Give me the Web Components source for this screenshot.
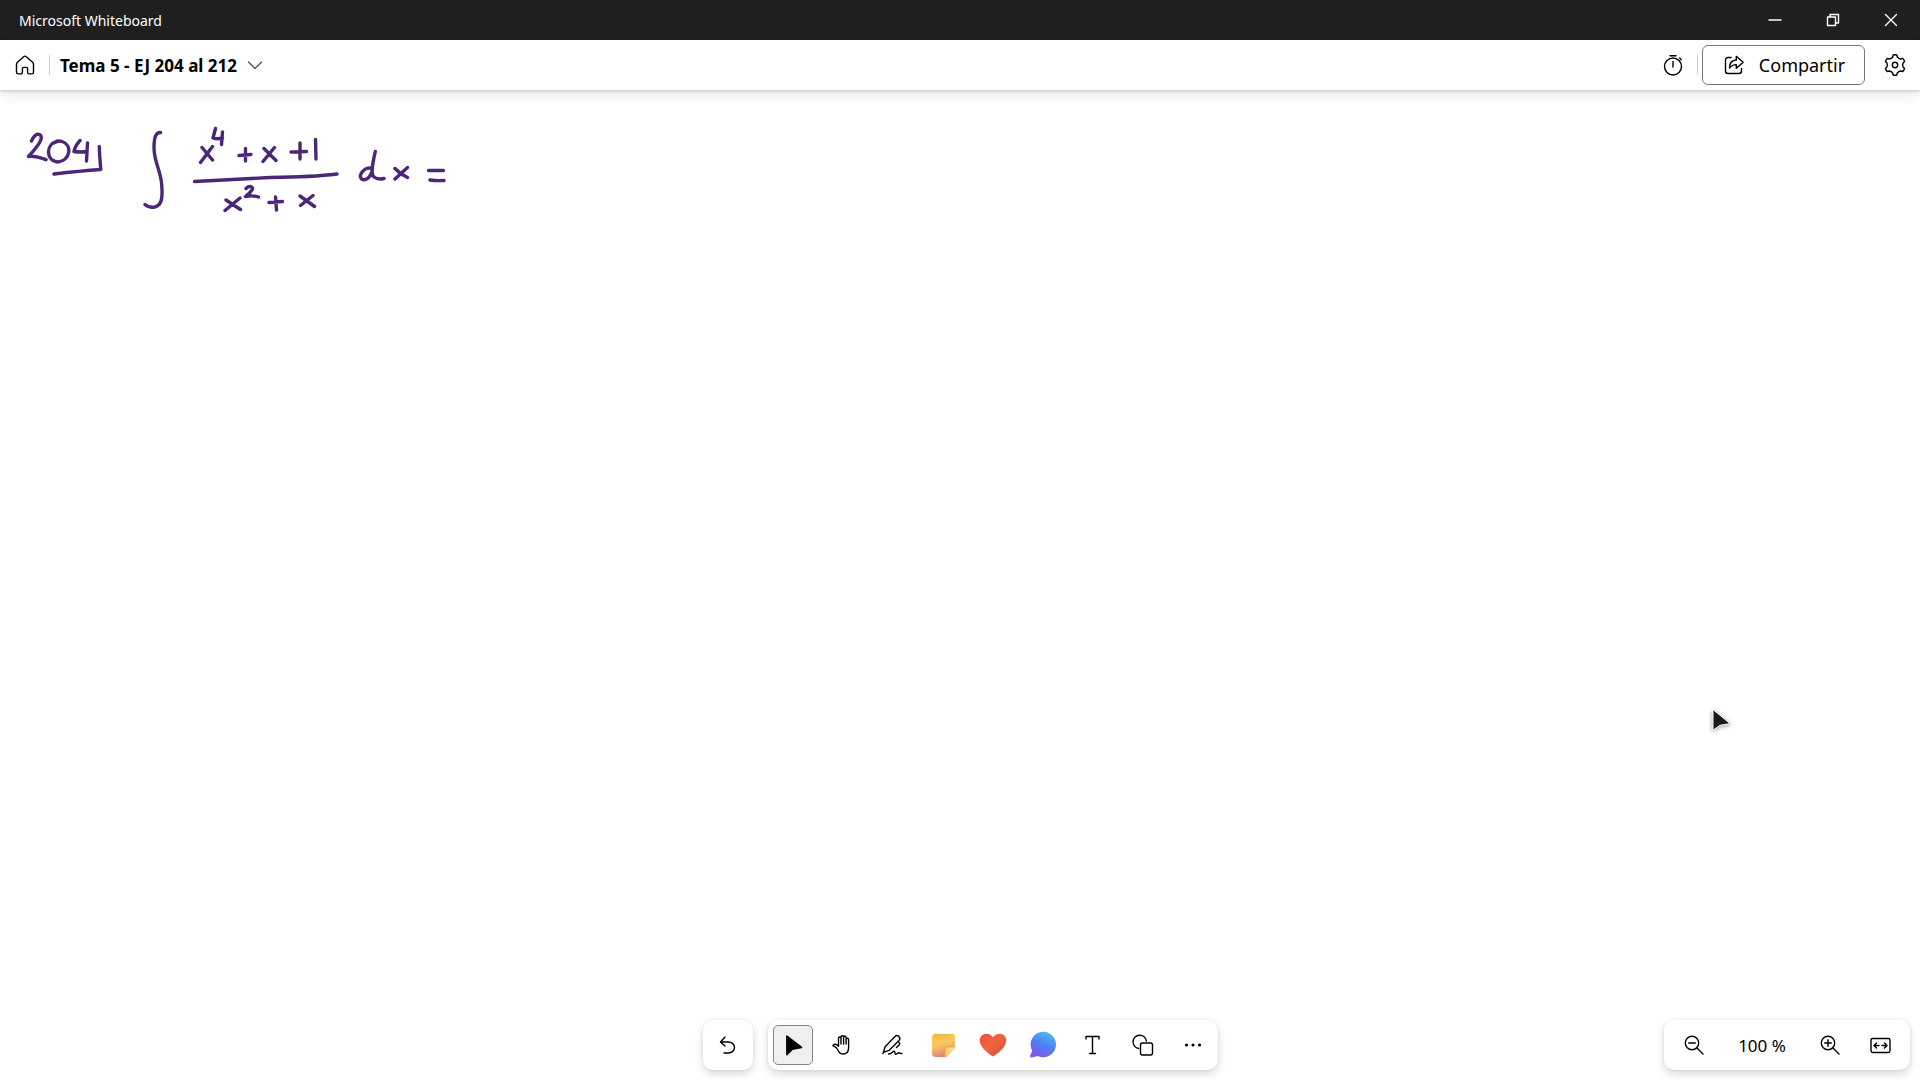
<!DOCTYPE html>
<html lang="es">
<head>
<meta charset="utf-8">
<title>Microsoft Whiteboard</title>
<style>
html, body { height: 100%; }
body { margin: 0; background: #fff; color: #000; font-family: "Segoe UI", "Noto Sans", "Open Sans", sans-serif; overflow: hidden; }
</style>
</head>
<body>
<wb-app></wb-app>
<script>
const define = (name, html, setup) => {
  const template = document.createElement("template");
  template.innerHTML = html;
  customElements.define(name, class extends HTMLElement {
    connectedCallback() {
      if (this.shadowRoot) return;
      this.attachShadow({ mode: "open" }).append(template.content.cloneNode(true));
      if (setup) setup(this);
    }
  });
};

/* Outline of a cog with six teeth: one tooth and one notch, turned by 60 degrees each time */
const cog = () => {
  let d = "";
  for (let i = 0; i < 6; i++) {
    const a = i * Math.PI / 3;
    const p = (x, y) => (12 + x * Math.cos(a) - y * Math.sin(a)).toFixed(2) + " " + (12 + x * Math.sin(a) + y * Math.cos(a)).toFixed(2);
    d += (i ? "L" : "M") + p(-1.8, -10) + "Q" + p(0, -10.4) + " " + p(1.8, -10) + "L" + p(2.3, -8) + "Q" + p(3.6, -6.2) + " " + p(5.78, -5.99);
  }
  return d + "Z";
};

/* Line icons, all on a 24-unit grid */
const icons = {
  home: '<path d="M4.2 9.6 10.7 3.7a2 2 0 0 1 2.6 0l6.500 5.900a2 2 0 0 1 .7 1.500v8.200a1.600 1.600 0 0 1-1.600 1.600h-2.700a1.600 1.600 0 0 1-1.600-1.600v-3.500a1.400 1.400 0 0 0-1.400-1.400h-2.400a1.400 1.400 0 0 0-1.400 1.400v3.500a1.600 1.600 0 0 1-1.600 1.600H5.100a1.600 1.600 0 0 1-1.600-1.600v-8.200a2 2 0 0 1 .7-1.500Z"/>',
  chevron: '<path d="m5.500 9 6.500 6.500L18.500 9"/>',
  timer: '<circle cx="12" cy="13.500" r="8.500"/><path d="M9 2.700h6M12 8.500V14M18.600 5.100l1.600 1.600"/>',
  share: '<path d="M9 4.500H6A2.500 2.500 0 0 0 3.500 7v11A2.500 2.500 0 0 0 6 20.500h11a2.500 2.500 0 0 0 2.500-2.500v-2.500"/><path d="M14.300 3.400V7C10 7.200 7.500 10.300 7.500 15c2-2.600 4-3.400 6.800-3.400v3.600l6.900-5.900Z"/>',
  gear: '<circle cx="12" cy="12" r="2.700"/><path d="' + cog() + '"/>',
  minimize: '<path d="M6 12h12"/>',
  restore: '<path d="M6.500 9h8v8.500h-8ZM9 9V6.500h8.500V15h-3"/>',
  close: '<path d="m6.500 6.500 11 11M17.500 6.500l-11 11"/>',
  undo: '<path d="M9 4 4.500 9 9 13M4.500 9h8a6 5.500 0 0 1 0 11H8"/>',
  pointer: '<path fill="currentColor" d="M5.900 3.200v18.500l5.400-5.500 9.200-1.700Z" stroke-width="1.600"/>',
  hand: '<path d="M7.500 13.200V5.300a1.200 1.200 0 0 1 2.500 0V11M10 10.500V4a1.300 1.300 0 0 1 2.600 0v7M12.600 10.500V4.200a1.200 1.200 0 0 1 2.500 0V11M15.100 11V6.500a1.200 1.200 0 0 1 2.500 0v8c0 4.200-1.900 6.500-5.500 6.500-2.600 0-4-1.300-5-3.500l-1.600-2.600-3.600-2.300c1-1.700 2.700-1.700 4.200-.6l1.400 1.200"/>',
  pen: '<path d="M2.500 19.300 4.100 13.700 14 3.600a2.700 2.700 0 0 1 4 3.800L8 17.400l-5.500 1.900ZM2.500 19.300l-.6 1.300M17 8.400l1.300 1.300a1.500 1.500 0 0 1 0 2.100L15.500 14.600M7.500 21c3.500-.3 4-2.700 5.500-2.700 1.800 0 0 2.900 1.800 3 1.200 0 1.900-1.500 3-1.500 1.200 0 1.300.9 3.200.7"/>',
  type: '<path d="M5 6V3.500h13V6M11.500 3.500v17M8.500 20.500h6"/>',
  shapes: '<path d="M7.700 15.500a6.700 6.700 0 1 1 7.700-7.500"/><rect x="9.500" y="10" width="12" height="12" rx="2"/>',
  more: '<g fill="currentColor" stroke="none"><circle cx="5.500" cy="12" r="1.600"/><circle cx="12" cy="12" r="1.600"/><circle cx="18.500" cy="12" r="1.600"/></g>',
  zoomout: '<circle cx="10" cy="10" r="6.700"/><path d="m15 15 6 6M6.700 10h6.600"/>',
  zoomin: '<circle cx="10" cy="10" r="6.700"/><path d="m15 15 6 6M6.700 10h6.600M10 6.700v6.600"/>',
  fit: '<rect x="3" y="5.500" width="19" height="14" rx="1.700"/><path d="M11 12.500H6.200M8.500 10 6 12.500 8.500 15M14 12.500h4.800M16.500 10l2.500 2.500-2.500 2.500"/>',
  note: '<defs><linearGradient id="n" x2=".3" y2="1"><stop stop-color="#f5b43c"/><stop offset=".5" stop-color="#fbc85e"/><stop offset="1" stop-color="#dd8776"/></linearGradient><linearGradient id="f" x1="0" x2="1"><stop stop-color="#ffc95c"/><stop offset="1" stop-color="#fff0a8"/></linearGradient></defs><g stroke="none"><path fill="url(#n)" d="M4.500.800h16a3.400 3.400 0 0 1 3.400 3.400V14.500L14.500 24h-10A3.400 3.400 0 0 1 1.100 20.600V4.200A3.400 3.400 0 0 1 4.500.800Z"/><path fill="url(#f)" stroke="#f09b44" stroke-width=".7" d="M14 24v-7.300a2.700 2.700 0 0 1 2.700-2.700h7.200v.5L14.500 24Z"/></g>',
  heart: '<defs><linearGradient id="h" x2="1" y2="1"><stop stop-color="#e84e43"/><stop offset=".45" stop-color="#f3653f"/><stop offset="1" stop-color="#c84b38"/></linearGradient></defs><path fill="url(#h)" stroke="none" d="M12 23.600C8 21-1.300 14.500-1.300 7.500-1.300 3.700 1.500.700 5.400.700c2.900 0 5.300 1.500 6.600 3.600C13.300 2.200 15.700.700 18.600.700c3.900 0 6.700 3 6.700 6.800C25.300 14.500 16 21 12 23.600Z"/>',
  comment: '<defs><linearGradient id="c" x1=".7" y1="0" x2=".25" y2="1"><stop stop-color="#55b9e9"/><stop offset=".5" stop-color="#4d80f5"/><stop offset="1" stop-color="#8953dd"/></linearGradient></defs><path fill="url(#c)" stroke="none" d="M12.500-1.200a12.700 12.700 0 1 1-5.800 24.100L.8 24.500a1.400 1.400 0 0 1-1.600-1.900L1.300 17.800A12.700 12.700 0 0 1 12.500-1.200Z"/>'
};

/* <wb-icon name="…"> */
define("wb-icon", `<style>
  :host { display: inline-flex; width: 24px; height: 24px; flex: none; }
  svg { width: 100%; height: 100%; overflow: visible; fill: none; stroke: currentColor; stroke-width: 1.4; stroke-linecap: round; stroke-linejoin: round; }
</style><svg viewBox="0 0 24 24" aria-hidden="true"></svg>`,
  host => host.shadowRoot.querySelector("svg").innerHTML = icons[host.getAttribute("name")]);

/* Icon-only button */
define("wb-tool", `<style>
  :host { display: block; flex: none; }
  button { box-sizing: border-box; display: flex; align-items: center; justify-content: center; width: var(--tool-width, 40px); height: 40px; padding: 0; border: 1px solid transparent; border-radius: 5px; background: none; color: inherit; font: inherit; }
  button[aria-pressed=true] { background: #efefef; border-color: #858585; }
</style><button type="button"></button>`,
  host => {
    const button = host.shadowRoot.querySelector("button");
    button.setAttribute("aria-label", host.getAttribute("label"));
    if (host.hasAttribute("pressed")) button.setAttribute("aria-pressed", "true");
    const icon = document.createElement("wb-icon");
    icon.setAttribute("name", host.getAttribute("icon"));
    button.append(icon);
  });

/* Floating card which holds tools */
define("wb-card", `<style>
  :host { display: flex; align-items: center; gap: 10px; padding: 5px; border-radius: 10px; background: #fff; box-shadow: 0 4px 9px rgba(0,0,0,.15), 0 0 3px rgba(0,0,0,.09); }
</style><slot></slot>`);

define("wb-titlebar", `<style>
  :host { display: flex; align-items: center; justify-content: space-between; height: 40px; padding-left: 19px; background: #1f1f1f; color: #fff; font-size: 14px; }
  nav { display: flex; --tool-width: 58px; }
</style><span>Microsoft Whiteboard</span>
<nav><wb-tool icon="minimize" label="Minimizar"></wb-tool><wb-tool icon="restore" label="Restaurar"></wb-tool><wb-tool icon="close" label="Cerrar"></wb-tool></nav>`);

define("wb-header", `<style>
  :host { position: relative; z-index: 1; display: flex; align-items: center; justify-content: space-between; height: 50px; padding: 0 5px; background: #fff; box-shadow: 0 1px 3px rgba(0,0,0,.18), 0 4px 12px rgba(0,0,0,.1); }
  div { display: flex; align-items: center; }
  i { width: 1px; height: 20px; background: #d0d0d0; margin: 0 4px; }
  button { box-sizing: border-box; display: flex; align-items: center; height: 40px; border: 0; background: none; color: inherit; font: inherit; padding: 0; }
  .name { gap: 6px; margin-left: 6px; font-size: 17px; font-weight: 700; }
  .name wb-icon { color: #555; }
  .share { gap: 13px; width: 163px; justify-content: center; border: 1px solid #777; border-radius: 6px; margin-right: 10px; font-size: 18px; }
</style>
<div><wb-tool icon="home" label="Inicio"></wb-tool><i></i><button class="name" type="button">Tema 5 - EJ 204 al 212<wb-icon name="chevron"></wb-icon></button></div>
<div><wb-tool icon="timer" label="Temporizador"></wb-tool><i></i><button class="share" type="button"><wb-icon name="share"></wb-icon>Compartir</button><wb-tool icon="gear" label="Configuración"></wb-tool></div>`);

/* Pen strokes on the free canvas */
define("wb-ink", `<style>
  :host { position: absolute; left: 20px; top: 30px; }
  svg { display: block; width: 440px; height: 100px; fill: none; stroke: #4c2678; stroke-width: 3.4; stroke-linecap: round; stroke-linejoin: round; }
</style><svg viewBox="20 120 440 100" role="img" aria-label="204) integral"><path d="
  M31.500 141Q35 133 39.500 134.500C44 137 40 144 28.500 156.500Q34 155.500 46 159.700
  M57 141C45 145 46 161 58 162C70 161 73 145 62 141.500Q58 140 54 143
  M80 140.500Q75 146 74 151.500Q80 152.500 87 151.500M87.500 143L86.500 161
  M99.300 146.500Q99.500 155 100.800 169.500Q80 171 54 174
  M160.500 132.500C155 132 154 140 154 148C154 162 161 171 161.700 185C163 200 161 205 155 207Q149 208 145 204.500
  M202 147.500L212.500 160M212.500 146.500L200.500 162.500
  M215.500 128.500L213 138Q217 139.500 222.500 138M222.500 132L221.500 144.500
  M239 155.500L251 154.500M245.500 148.500V161
  M264 148.500L276 160.500M274.500 147.500L263 161.500
  M291 152L306.500 151.500M300 143L300 159
  M315.500 139.500L316 159
  M194.500 181.500Q230 179.500 270 177.500Q313 177 337 174
  M226 200L240.500 209.500M240 198L225 210.500
  M246 188.500C249 185.500 254 186 252 190Q250 193 245.500 196.500Q252 195 258.500 197
  M269 202.500L282.500 201.500M275.500 197L276.500 210
  M300 196L314.500 206.500M313 195.500L300.500 205.500
  M375.300 151.500C373 162 370 174 374 177Q378 180 384 178.500
  M372 168C364 167 358 175 361.500 179C366 181.500 370 177 372 172
  M395 168.500Q400 174 407.500 177.500M407.500 167.500L395 179
  M428.500 170.500H443.500M430 180Q437 181 444 180.500"/></svg>`);

define("wb-cursor", `<style>
  :host { position: absolute; right: 187px; top: 617px; }
  svg { display: block; width: 22px; height: 26px; overflow: visible; filter: drop-shadow(0 1px 2px #0006); }
</style><svg viewBox="0 0 22 26" aria-hidden="true"><path fill="#191919" stroke="#fff" d="M2 2.500V23.200L9 18.300 19.200 16.700Z"/></svg>`);

define("wb-app", `<style>
  :host { display: flex; flex-direction: column; height: 100%; min-height: 100vh; }
  main { position: relative; flex: 1; display: flex; align-items: flex-end; }
  footer { box-sizing: border-box; display: grid; grid-template-columns: 1fr auto 1fr; align-items: end; width: 100%; padding: 10px; }
  .tools { grid-column: 2; display: flex; gap: 15px; }
  .zoom { justify-self: end; padding: 5px 10px; font-size: 17px; }
  .zoom output { width: 76px; text-align: center; white-space: nowrap; }
</style>
<wb-titlebar></wb-titlebar>
<wb-header></wb-header>
<main>
  <wb-ink></wb-ink>
  <wb-cursor></wb-cursor>
  <footer>
    <div class="tools">
      <wb-card><wb-tool icon="undo" label="Deshacer"></wb-tool></wb-card>
      <wb-card>
        <wb-tool icon="pointer" label="Seleccionar" pressed></wb-tool><wb-tool icon="hand" label="Desplazar"></wb-tool><wb-tool icon="pen" label="Entrada de lápiz"></wb-tool><wb-tool icon="note" label="Notas"></wb-tool><wb-tool icon="heart" label="Reacciones"></wb-tool><wb-tool icon="comment" label="Comentario"></wb-tool><wb-tool icon="type" label="Texto"></wb-tool><wb-tool icon="shapes" label="Formas"></wb-tool><wb-tool icon="more" label="Más opciones"></wb-tool>
      </wb-card>
    </div>
    <wb-card class="zoom"><wb-tool icon="zoomout" label="Alejar"></wb-tool><output>100 %</output><wb-tool icon="zoomin" label="Acercar"></wb-tool><wb-tool icon="fit" label="Ajustar a la pantalla"></wb-tool></wb-card>
  </footer>
</main>`);
</script>
</body>
</html>
